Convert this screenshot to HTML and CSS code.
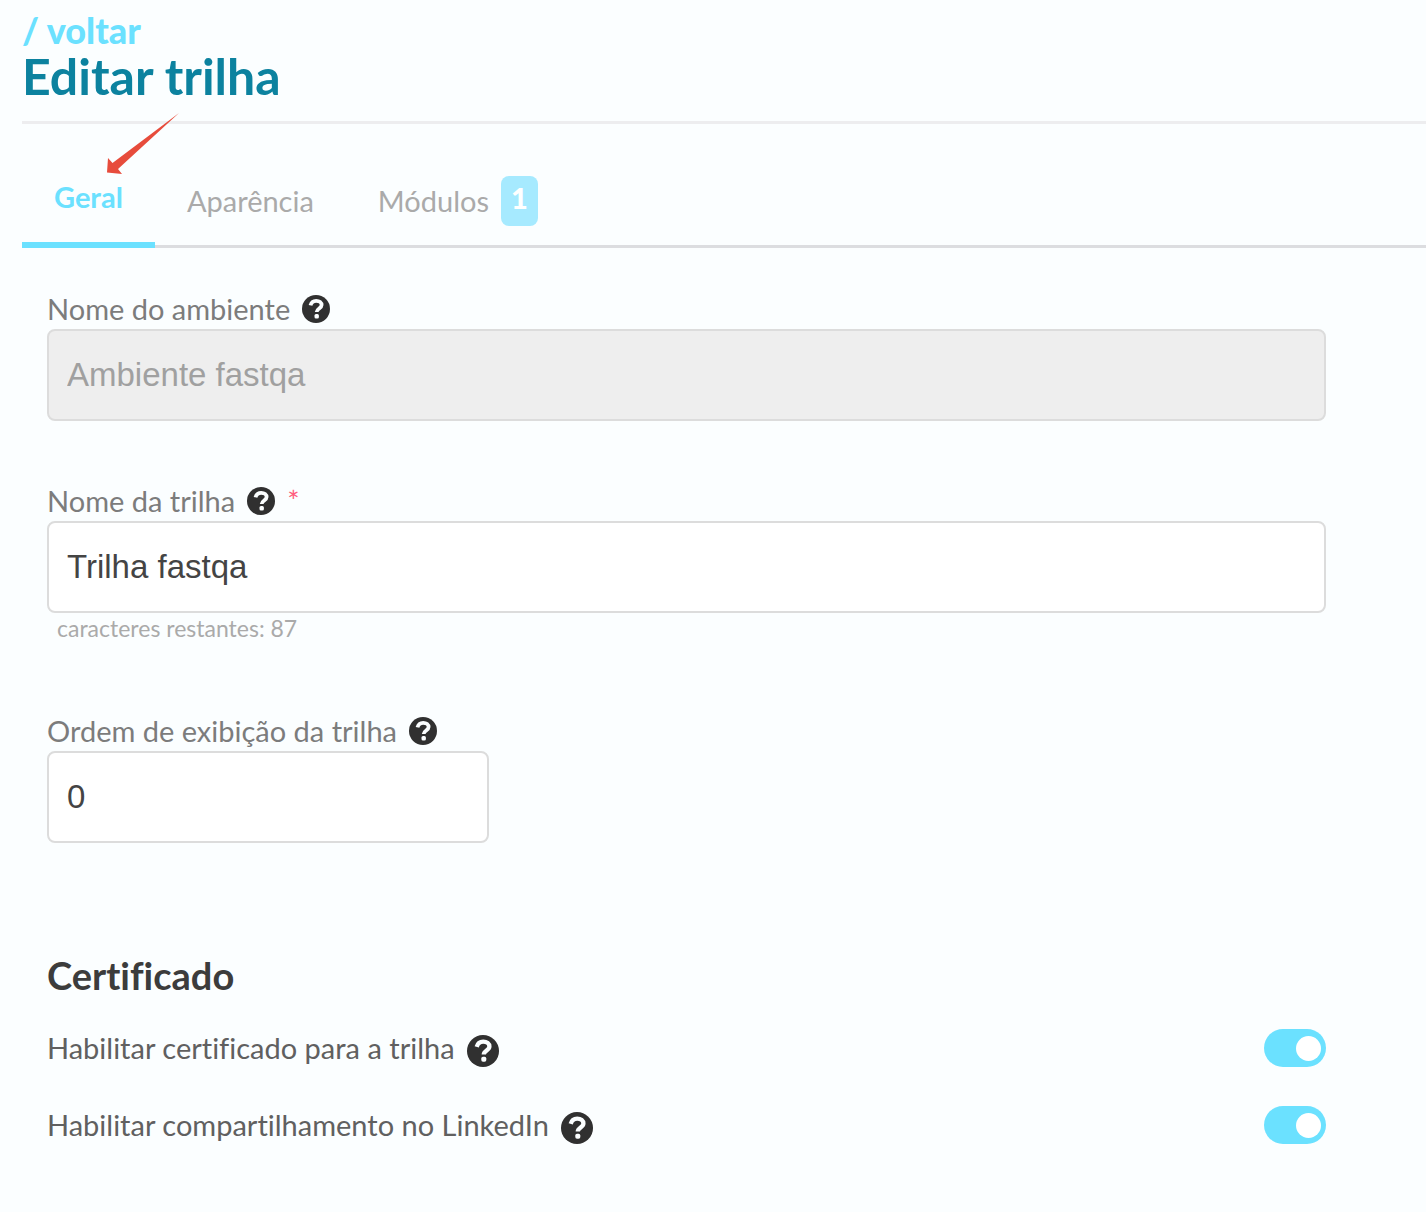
FILE: index.html
```
<!DOCTYPE html>
<html lang="pt-BR">
    <head>
        <meta charset="utf-8">
        <meta name="viewport" content="width=device-width, initial-scale=1">
        <title>Editar trilha</title>
        <link rel="stylesheet" href="styles.css">
    </head>

    <body>
        <svg class="sprite" aria-hidden="true">
            <symbol id="help" viewBox="0 0 28 28">
                <circle cx="14" cy="14" r="14" fill="#303030"/>
                <path d="M8.500 10.400C9.300 7.200 11.500 5.800 14.200 5.800c3.200 0 5.400 1.700 5.400 4.300 0 3.400-4.900 3.500-4.900 7" fill="none" stroke="#fbfeff" stroke-width="3.800"/>
                <rect x="12.500" y="19" width="4.400" height="4.400" rx="1.500" fill="#fbfeff"/>
            </symbol>
        </svg>

        <header class="header">
            <a class="back" href="#">/ voltar</a>
            <h1 class="title">Editar trilha</h1>
        </header>

        <nav class="tabs">
            <a class="tab active" href="#geral">Geral</a>
            <a class="tab" href="#aparencia">Aparência</a>
            <a class="tab" href="#modulos">Módulos <span class="badge">1</span></a>
            <svg class="arrow" viewBox="0 0 72 61" aria-hidden="true">
                <path d="M72 0L11 56l4 5L0 59.500 1 45l4.500 5z" fill="#e74c3c"/>
            </svg>
        </nav>

        <form class="form">
            <div class="field">
                <div class="label">
                    <label for="ambiente">Nome do ambiente</label>
                    <svg class="help"><use href="#help"/></svg>
                </div>
                <input class="input" type="text" id="ambiente" value="Ambiente fastqa" disabled>
            </div>

            <div class="field">
                <div class="label">
                    <label for="trilha">Nome da trilha</label>
                    <svg class="help"><use href="#help"/></svg>
                    <span class="required">*</span>
                </div>
                <input class="input" type="text" id="trilha" value="Trilha fastqa">
                <span class="hint">caracteres restantes: 87</span>
            </div>

            <div class="field">
                <div class="label">
                    <label for="ordem">Ordem de exibição da trilha</label>
                    <svg class="help"><use href="#help"/></svg>
                </div>
                <input class="input small" type="text" id="ordem" value="0">
            </div>

            <h2 class="subtitle">Certificado</h2>
            <div class="option">
                <label for="certificado">Habilitar certificado para a trilha</label>
                <svg class="help"><use href="#help"/></svg>
                <input class="switch" type="checkbox" id="certificado" checked>
            </div>
            <div class="option">
                <label for="linkedin">Habilitar compartilhamento no LinkedIn</label>
                <svg class="help"><use href="#help"/></svg>
                <input class="switch" type="checkbox" id="linkedin" checked>
            </div>
        </form>
    </body>
</html>
```
FILE: styles.css
```
* {
    box-sizing: border-box;
}

body {
    margin: 0;
    padding: 12px 0 60px 22px;
    background-color: #fbfeff;
    color: #606060;
    font-family: Lato, "Noto Sans", sans-serif;
    font-size: 29px;
    font-variant-ligatures: none;
    line-height: 36px;
}

a {
    text-decoration: none;
}

.sprite {
    display: none;
}

.header {
    border-bottom: 3px solid #ededef;
    padding-bottom: 17px;
}

.back {
    display: block;
    color: #6be1ff;
    font-size: 36px;
    font-weight: 900;
}

.title {
    margin: 0;
    color: #0c829f;
    font-size: 50px;
    font-weight: bold;
    line-height: 56px;
}

.tabs {
    position: relative;
    display: flex;
    align-items: stretch;
    height: 124px;
    padding-top: 32px;
    border-bottom: 3px solid #dcdde0;
}

.tab {
    display: flex;
    align-items: center;
    gap: 12px;
    padding: 0 32px;
    color: #aaa;
}

.active {
    margin-bottom: -3px;
    padding-bottom: 4px;
    border-bottom: 6px solid #6be1ff;
    color: #6be1ff;
    font-weight: bold;
}

.badge {
    height: 50px;
    padding: 4px 10px;
    border-radius: 8px;
    background-color: #a6eaff;
    color: white;
    font-weight: 900;
}

.arrow {
    position: absolute;
    top: -11px;
    left: 85px;
    width: 72px;
    height: 61px;
}

.form {
    padding: 44px 100px 0 25px;
}

.field {
    display: flex;
    flex-direction: column;
    margin-bottom: 63px;
}

.label {
    display: flex;
    align-items: center;
    gap: 12px;
    height: 37px;
    padding-bottom: 4px;
    color: #7c7c7c;
}

.help {
    flex: none;
    width: 28px;
    height: 28px;
}

.required {
    color: #ff5c7c;
    font-size: 29px;
}

.input {
    width: 100%;
    height: 92px;
    padding: 0 18px;
    border: 2px solid #dcdcdc;
    border-radius: 8px;
    background-color: white;
    color: #444;
    font-family: "Liberation Sans", Arial, sans-serif;
    font-size: 33px;
}

.input:disabled {
    background-color: #eee;
    color: #a0a0a0;
}

.small {
    width: 442px;
    max-width: 100%;
}

.hint {
    padding: 0 10px 8px;
    color: #aaa;
    font-size: 23px;
    line-height: 30px;
}

.subtitle {
    margin: 108px 0 30px;
    color: #3c3c3c;
    font-size: 38px;
    font-weight: bold;
    line-height: 48px;
}

.option {
    display: flex;
    align-items: center;
    gap: 12px;
    height: 38px;
    margin-bottom: 39px;
}

.option .help {
    width: 32px;
    height: 32px;
    margin-top: 6px;
}

.switch {
    appearance: none;
    display: flex;
    align-items: center;
    width: 62px;
    height: 38px;
    margin: 0 0 0 auto;
    padding: 0 5px;
    border-radius: 19px;
    background-color: #ccc;
}

.switch::before {
    content: "";
    width: 25px;
    height: 25px;
    border-radius: 50%;
    background-color: white;
}

.switch:checked {
    justify-content: flex-end;
    background-color: #6be1ff;
}
```
